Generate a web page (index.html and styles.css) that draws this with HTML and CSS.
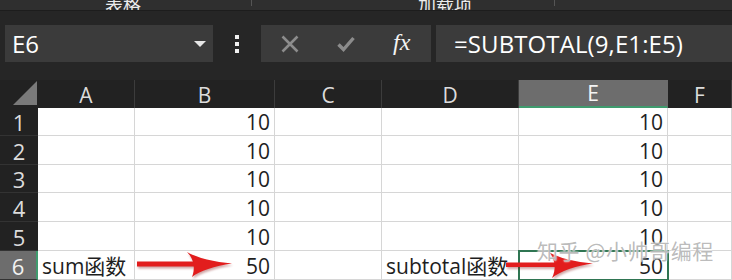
FILE: index.html
```html
<!DOCTYPE html>
<html lang="zh-CN">
<head>
  <meta charset="UTF-8" />
  <title>SUBTOTAL</title>
  <link rel="stylesheet" href="styles.css">
</head>
<body>
  <div class="app">
    <!-- ribbon tabs (cut off at top) -->
    <div class="ribbon">
      <span class="tab tab-1">表格</span>
      <span class="tab-sep sep-1"></span>
      <span class="tab tab-2">加载项</span>
      <span class="tab-sep sep-2"></span>
    </div>

    <!-- formula bar -->
    <div class="fbar">
      <div class="namebox">
        <span>E6</span>
        <svg width="12" height="6" viewBox="0 0 12 6"><path d="M0 0H12L6 6Z" fill="#e6e6e6"/></svg>
      </div>
      <div class="dots">
        <svg width="4" height="18" viewBox="0 0 4 18"><rect x="0" y="0" width="4" height="4" fill="#f0f0f0"/><rect x="0" y="7" width="4" height="4" fill="#f0f0f0"/><rect x="0" y="14" width="4" height="4" fill="#f0f0f0"/></svg>
      </div>
      <div class="fbtns">
        <svg class="ico-x" width="18" height="18" viewBox="0 0 18 18"><path d="M1.5 1.5L16.5 16.5M16.5 1.5L1.5 16.5" stroke="#8c8c8c" stroke-width="2.6" fill="none"/></svg>
        <svg class="ico-ok" width="18" height="16" viewBox="0 0 18 16"><path d="M1.5 8.5L6.5 13.5L16.5 2" stroke="#8c8c8c" stroke-width="3.4" fill="none"/></svg>
        <span class="fx">fx</span>
      </div>
      <div class="formula">=SUBTOTAL(9,E1:E5)</div>
    </div>

    <!-- sheet -->
    <div class="sheet">
      <div class="hd corner"><svg width="24" height="24" viewBox="0 0 24 24"><path d="M24 0V24H0Z" fill="#7a7a7a"/></svg></div>
      <div class="hd col">A</div>
      <div class="hd col">B</div>
      <div class="hd col">C</div>
      <div class="hd col">D</div>
      <div class="hd col sel-col">E</div>
      <div class="hd col">F</div>

      <div class="hd row">1</div><div class="c"></div><div class="c num">10</div><div class="c"></div><div class="c"></div><div class="c num">10</div><div class="c"></div>
      <div class="hd row">2</div><div class="c"></div><div class="c num">10</div><div class="c"></div><div class="c"></div><div class="c num">10</div><div class="c"></div>
      <div class="hd row">3</div><div class="c"></div><div class="c num">10</div><div class="c"></div><div class="c"></div><div class="c num">10</div><div class="c"></div>
      <div class="hd row">4</div><div class="c"></div><div class="c num">10</div><div class="c"></div><div class="c"></div><div class="c num">10</div><div class="c"></div>
      <div class="hd row">5</div><div class="c"></div><div class="c num">10</div><div class="c"></div><div class="c"></div><div class="c num">10</div><div class="c"></div>
      <div class="hd row sel-row">6</div><div class="c txt">sum函数</div><div class="c num">50</div><div class="c"></div><div class="c txt">subtotal函数</div><div class="c num active">50</div><div class="c"></div>
    </div>

    <!-- red arrows drawn over the sheet -->
    <svg class="arrow arrow-1" width="100" height="30" viewBox="0 0 100 30">
      <path d="M0 9.5H58V14.5H0Z" fill="#e21d1d"/>
      <path d="M50 0C60 6 78 10 95 11.5C78 14 62 19 55 25C58 18 58 8 50 0Z" fill="#e21d1d"/>
    </svg>
    <svg class="arrow arrow-2" width="90" height="30" viewBox="0 0 90 30">
      <path d="M0 10.5H50V15H0Z" fill="#e21d1d"/>
      <path d="M43 0C52 6 70 10 87 11.5C70 14 54 19 46 26C50 18 50 8 43 0Z" fill="#e21d1d"/>
    </svg>

    <div class="watermark">知乎 @小帅哥编程</div>
  </div>
</body>
</html>
```

FILE: styles.css
```css
* { margin:0; padding:0; box-sizing:border-box; }
body { width:732px; height:280px; overflow:hidden; background:#262626; font-family:"Open Sans", "Noto Sans", "Noto Sans CJK SC", sans-serif; }
.app { position:relative; width:732px; height:280px; overflow:hidden; }

/* ribbon */
.ribbon { height:11px; background:#2f2f2f; border-bottom:1px solid #1d1d1d; overflow:hidden; display:flex; align-items:flex-end; }
.tab { color:#ececec; font-size:18px; line-height:18px; margin-bottom:-3px; font-family:"Noto Sans CJK SC", sans-serif; }
.tab-1 { margin-left:105px; }
.tab-2 { margin-left:166px; }
.tab-sep { width:1px; height:6px; background:#555; align-self:flex-start; }
.sep-1 { margin-left:110px; }
.sep-2 { margin-left:82px; }

/* formula bar */
.fbar { height:69px; display:flex; align-items:flex-start; padding-top:14px; padding-left:5px; }
.namebox { width:208px; height:37px; background:#3b3b3b; display:flex; align-items:center; justify-content:space-between; padding:0 7px 0 7px; color:#fff; font-size:24px; }
.namebox span { line-height:37px; margin-top:-1px; }
.dots { width:48px; height:37px; display:flex; align-items:center; justify-content:center; }
.fbtns { width:170px; height:37px; background:#3b3b3b; display:flex; align-items:center; padding-left:20px; }
.ico-x { margin-right:38px; }
.ico-ok { margin-right:38px; }
.fx { color:#f4f4f4; font-family:"Liberation Serif", serif; font-style:italic; font-size:24px; line-height:37px; margin-top:-2px; }
.formula { flex:1; height:37px; margin-left:5px; background:#3b3b3b; color:#fff; font-size:24px; line-height:37px; padding-left:18px; white-space:nowrap; letter-spacing:0.1px; }

/* sheet grid */
.sheet { display:grid; grid-template-columns:38px 97px 140px 107px 137px 149px 64px; grid-template-rows:28px 28px 29px 28px 29px 29px 29px; background:#fff; }
.hd { background:#222; color:#dcdcdc; font-size:21px; display:flex; align-items:flex-end; justify-content:center; line-height:26px; }
.col { border-right:1px solid #3c3c3c; }
.corner { align-items:flex-end; justify-content:flex-end; padding:0 1px 3px 0; }
.sel-col { background:#6d6d6d; color:#f4f4f4; border-bottom:2px solid #3f9b6e; border-right:1px solid #6d6d6d; }
.row { border-bottom:1px solid #333; font-size:22px; }
.sel-row { background:#6d6d6d; color:#f2f2f2; border-right:2px solid #3f9b6e; }
.c { border-right:1px solid #d6d6d6; border-bottom:1px solid #d6d6d6; color:#1e1e1e; font-size:21px; line-height:26px; display:flex; align-items:flex-end; overflow:visible; white-space:nowrap; }
.num { justify-content:flex-end; padding-right:4px; }
.txt { padding-left:4px; font-family:"Open Sans", "Noto Sans CJK SC", sans-serif; }
.active { outline:2px solid #2f7552; outline-offset:-1px; position:relative; z-index:1; }

/* overlays */
.arrow { position:absolute; filter:drop-shadow(1px 2px 1px rgba(120,0,0,0.35)); z-index:2; }
.arrow-1 { left:137px; top:252px; }
.arrow-2 { left:506px; top:252px; }
.watermark { position:absolute; left:537px; top:235px; z-index:3; font-family:"Noto Sans CJK SC", sans-serif; font-size:21px; letter-spacing:0.6px; color:rgba(130,130,130,0.55); text-shadow:0 0 1px #fff, 0 0 2px #fff; white-space:nowrap; }
```
